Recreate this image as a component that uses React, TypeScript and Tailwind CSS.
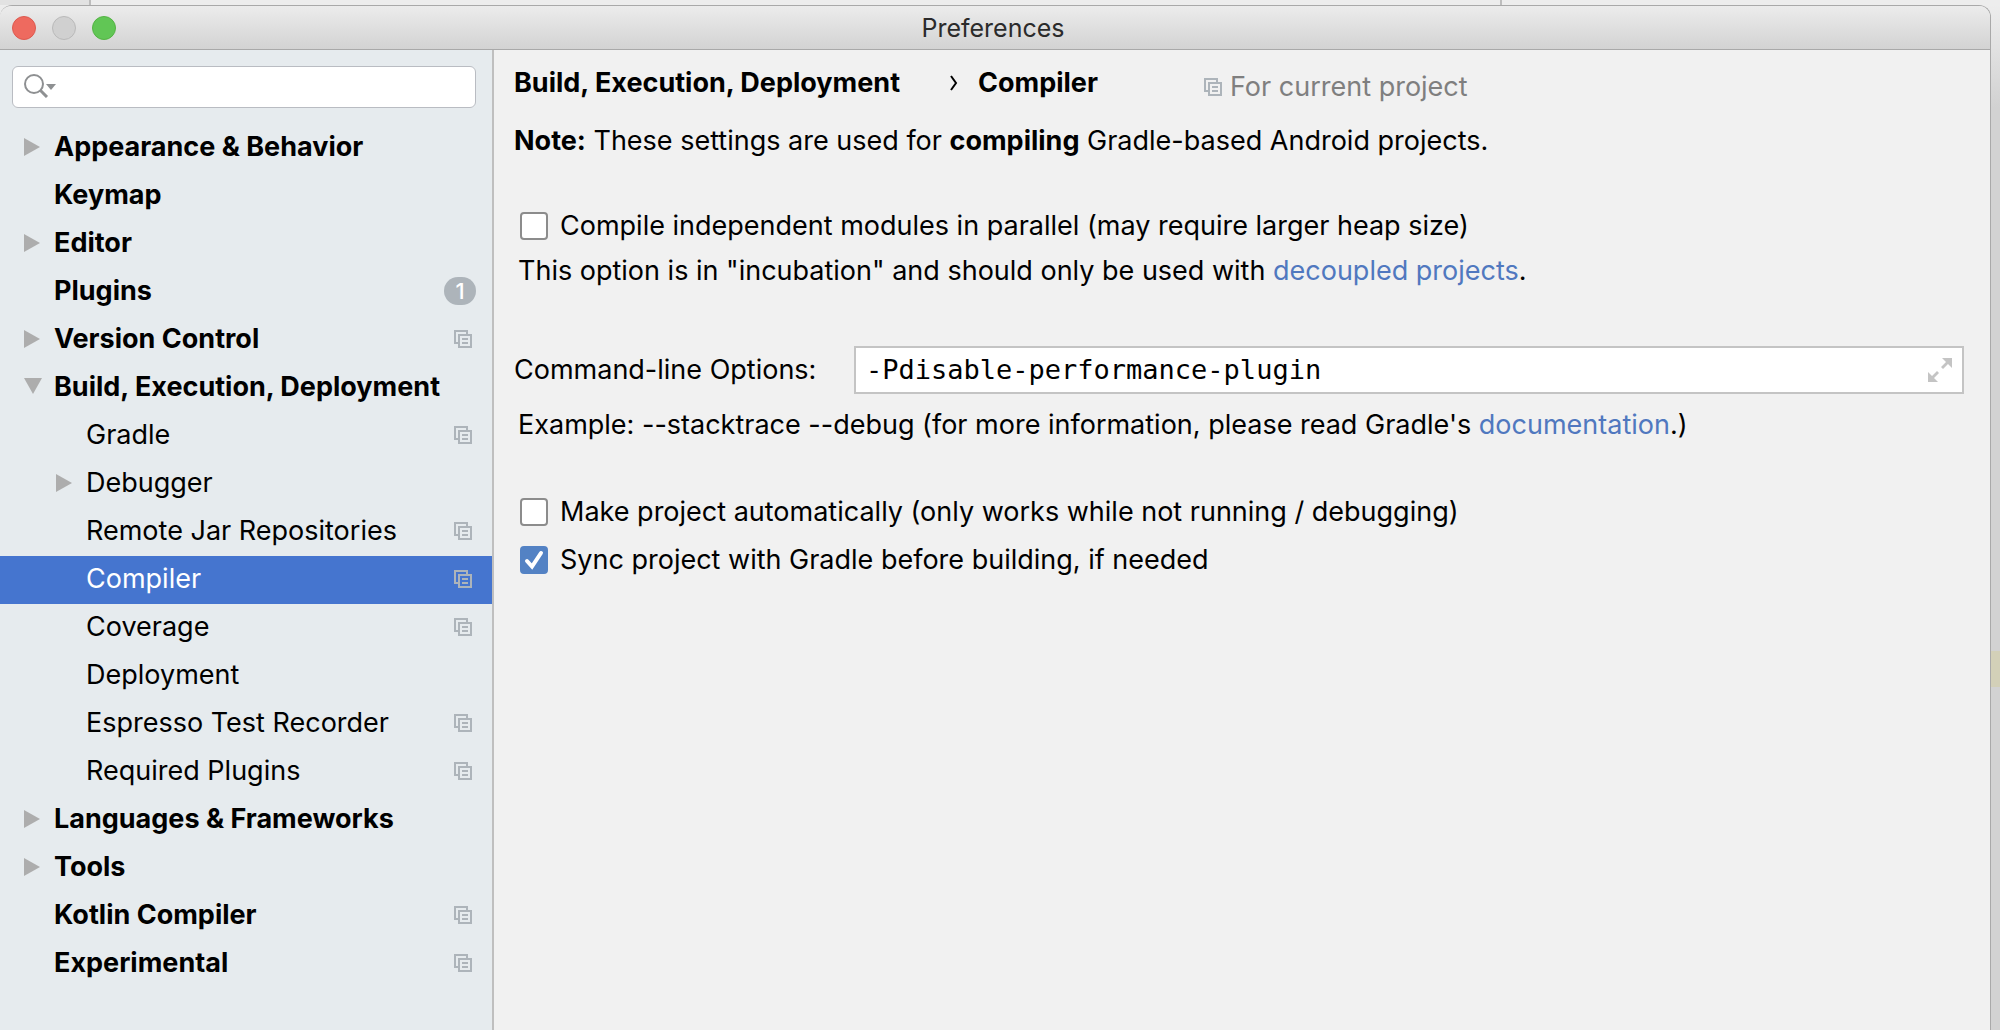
import React, { useState } from "react";
import clsx from "clsx";

type Item = {
  name: string;
  level?: number;
  arrow?: "right" | "down";
  project?: boolean;
  badge?: number;
};

const items: Item[] = [
  { name: "Appearance & Behavior", arrow: "right" },
  { name: "Keymap" },
  { name: "Editor", arrow: "right" },
  { name: "Plugins", badge: 1 },
  { name: "Version Control", arrow: "right", project: true },
  { name: "Build, Execution, Deployment", arrow: "down" },
  { name: "Gradle", level: 1, project: true },
  { name: "Debugger", level: 1, arrow: "right" },
  { name: "Remote Jar Repositories", level: 1, project: true },
  { name: "Compiler", level: 1, project: true },
  { name: "Coverage", level: 1, project: true },
  { name: "Deployment", level: 1 },
  { name: "Espresso Test Recorder", level: 1, project: true },
  { name: "Required Plugins", level: 1, project: true },
  { name: "Languages & Frameworks", arrow: "right" },
  { name: "Tools", arrow: "right" },
  { name: "Kotlin Compiler", project: true },
  { name: "Experimental", project: true },
];

const ProjectIcon = () => (
  <svg width="18" height="18" viewBox="0 0 18 18" className="shrink-0 text-[#adb4ba]" aria-hidden="true">
    <path d="M4 13H1V1H13V4" fill="none" stroke="currentColor" strokeWidth="2" />
    <rect x="5" y="5" width="12" height="12" fill="none" stroke="currentColor" strokeWidth="2" />
    <path d="M8 9H14M8 13H14" stroke="currentColor" strokeWidth="2" />
  </svg>
);

const Arrow = ({ dir }: { dir?: "right" | "down" }) => (
  <svg width="18" height="18" viewBox="0 0 18 18" className="mr-3 shrink-0" fill="#adadad" aria-hidden="true">
    {dir === "right" && <path d="M0 0L16 9L0 18Z" />}
    {dir === "down" && <path d="M0 0H18L9 16Z" />}
  </svg>
);

const Check = ({ label, defaultChecked }: { label: string; defaultChecked?: boolean }) => (
  <label className="flex items-center gap-3 pl-1.5">
    <span className="grid shrink-0">
      <input
        type="checkbox"
        defaultChecked={defaultChecked}
        className="peer col-start-1 row-start-1 size-7 appearance-none rounded-sm border-2 border-[#8c8c8c] bg-white checked:border-[#5382c4] checked:bg-[#5382c4]"
      />
      <svg
        viewBox="0 0 28 28"
        className="pointer-events-none invisible col-start-1 row-start-1 size-7 peer-checked:visible"
        fill="none"
        stroke="white"
        aria-hidden="true"
      >
        <path d="M7 15L12 20.5L21 7" strokeWidth="4" strokeLinecap="round" />
      </svg>
    </span>
    {label}
  </label>
);

const Sidebar = () => {
  const [active, setActive] = useState("Compiler");
  return (
    <aside className="w-[494px] shrink-0 border-r-2 border-[#bfbfbf] bg-[#e6ebee]">
      <div className="px-3 pt-4 pb-4">
        <label className="flex h-[42px] w-[464px] items-center rounded-md border border-[#b9bcc2] bg-white pl-[11px]">
          <svg width="32" height="24" viewBox="0 0 32 24" fill="none" className="mb-0.5 shrink-0" aria-hidden="true">
            <circle cx="10" cy="10" r="9" stroke="#8e9092" strokeWidth="2" />
            <path d="M16 16L23 23" stroke="#8e9092" strokeWidth="3" />
            <path d="M22 10H32L27 16Z" fill="#8e9092" />
          </svg>
          <input type="text" aria-label="Search" className="min-w-0 flex-1 bg-transparent px-2 outline-none" />
        </label>
      </div>
      <nav>
        {items.map((item) => (
          <button
            key={item.name}
            onClick={() => setActive(item.name)}
            className={clsx(
              "flex h-12 w-full items-center pr-5 pb-0.5 text-left whitespace-nowrap",
              item.level ? "pl-14" : "pl-6 font-bold",
              active === item.name && "bg-[#4575cf] text-white"
            )}
          >
            <Arrow dir={item.arrow} />
            <span className="flex-1">{item.name}</span>
            {item.project && <ProjectIcon />}
            {item.badge && (
              <span className="-mr-1 flex h-7 w-8 items-center justify-center rounded-full bg-[#adb4ba] text-[22px] font-medium text-white">
                {item.badge}
              </span>
            )}
          </button>
        ))}
      </nav>
    </aside>
  );
};

const CompilerSettings = () => (
  <main className="min-w-0 flex-1 bg-[#f1f1f1] pt-[17px] pr-[26px] pl-5 leading-8">
    <div className="flex items-start gap-10">
      <h1 className="flex min-w-[650px] items-center gap-5 font-bold">
        <span className="min-w-[416px]">Build, Execution, Deployment</span>
        <svg width="8" height="16" viewBox="0 0 8 16" fill="none" aria-hidden="true">
          <path d="M1 1L6 8L1 15" stroke="black" strokeWidth="2" />
        </svg>
        <span>Compiler</span>
      </h1>
      <p className="flex items-center gap-2 pt-1 text-[#7f7f7f]">
        <ProjectIcon />
        For current project
      </p>
    </div>
    <p className="mt-[22px]">
      <b>Note:</b> These settings are used for <b>compiling</b> Gradle-based Android projects.
    </p>

    <div className="mt-[53px]">
      <Check label="Compile independent modules in parallel (may require larger heap size)" />
    </div>
    <p className="mt-[13px] pl-1">
      This option is in "incubation" and should only be used with{" "}
      <a href="#decoupled" className="text-[#5078bf]">
        decoupled projects
      </a>
      .
    </p>

    <div className="mt-[59px] flex items-center gap-6">
      <label htmlFor="options" className="min-w-[316px]">
        Command-line Options:
      </label>
      <div className="flex h-12 flex-1 items-center border-2 border-[#c4c4c4] bg-white pr-[10px] pl-[10px]">
        <input
          id="options"
          type="text"
          defaultValue="-Pdisable-performance-plugin"
          className="min-w-0 flex-1 bg-transparent font-['DejaVu_Sans_Mono',monospace] outline-none"
        />
        <button aria-label="Expand">
          <svg width="24" height="24" viewBox="0 0 24 24" fill="#c4c4c4" aria-hidden="true">
            <path d="M14 0H24V10L20 6L15 11L13 9L18 4Z" />
            <path d="M0 14L4 18L9 13L11 15L6 20L10 24H0Z" />
          </svg>
        </button>
      </div>
    </div>
    <p className="mt-[15px] pl-1">
      Example: --stacktrace --debug (for more information, please read Gradle's{" "}
      <a href="#documentation" className="text-[#5078bf]">
        documentation
      </a>
      .)
    </p>

    <div className="mt-[55px] flex flex-col gap-4">
      <Check label="Make project automatically (only works while not running / debugging)" />
      <Check label="Sync project with Gradle before building, if needed" defaultChecked />
    </div>
  </main>
);

const App = () => {
  return (
    <div className="flex min-h-screen flex-col bg-[#ededed] font-['Inter',sans-serif] text-[27px] text-black">
      {/* edge of the editor behind the dialog */}
      <div className="flex h-[5px]">
        <div className="w-[91px] border-r-2 border-[#bdbdbd] bg-[#e2e2e2]" />
        <div className="w-[1411px] border-r-2 border-[#bdbdbd]" />
      </div>
      <div className="flex flex-1 bg-linear-to-b from-[#ededed] to-[#d2d2d2] to-10%">
        <div className="flex min-w-0 flex-1 flex-col overflow-hidden rounded-t-xl border-t border-r border-[#a9a9a9] bg-[#f1f1f1]">
          <header className="grid h-11 grid-cols-[1fr_auto_1fr] items-center border-b border-[#a9a9a9] bg-linear-to-b from-[#ececec] to-[#d3d3d3] px-3">
            <div className="flex gap-4">
              <button aria-label="Close" className="size-6 rounded-full border border-[#dc5a50] bg-[#ee6a5f]" />
              <button aria-label="Minimize" className="size-6 rounded-full border border-[#b9b9b9] bg-[#d0d0d0]" />
              <button aria-label="Zoom" className="size-6 rounded-full border border-[#54b344] bg-[#61c655]" />
            </div>
            <h2 className="pt-0.5 pr-1 text-[25px] text-[#2b2b2b]">Preferences</h2>
          </header>
          <div className="flex flex-1">
            <Sidebar />
            <CompilerSettings />
          </div>
        </div>
        <div className="w-[9px] shrink-0 pt-[646px]">
          <div className="h-9 bg-[#d3d0b8]" />
        </div>
      </div>
    </div>
  );
};

export default App;
